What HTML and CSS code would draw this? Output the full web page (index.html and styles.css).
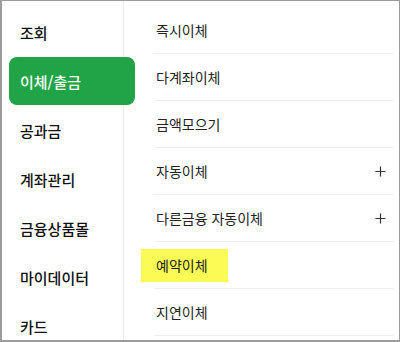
FILE: index.html
```html
<!DOCTYPE html>
<html lang="ko">
<head>
<meta charset="utf-8">
<link rel="stylesheet" href="styles.css">
</head>
<body>
<div class="frame">
  <nav class="side">
    <div class="side-item">조회</div>
    <div class="side-item active">이체/출금</div>
    <div class="side-item">공과금</div>
    <div class="side-item">계좌관리</div>
    <div class="side-item">금융상품몰</div>
    <div class="side-item">마이데이터</div>
    <div class="side-item">카드</div>
  </nav>
  <ul class="sub">
    <li class="sub-item">즉시이체</li>
    <li class="sub-item">다계좌이체</li>
    <li class="sub-item">금액모으기</li>
    <li class="sub-item">자동이체<svg class="plus" viewBox="0 0 11 11"><path d="M5.5 0.5v10M0.5 5.5h10"/></svg></li>
    <li class="sub-item">다른금융 자동이체<svg class="plus" viewBox="0 0 11 11"><path d="M5.5 0.5v10M0.5 5.5h10"/></svg></li>
    <li class="sub-item"><span class="mark">예약이체</span></li>
    <li class="sub-item">지연이체</li>
  </ul>
</div>
</body>
</html>
```
FILE: styles.css
```css
* { box-sizing: border-box; }
html, body { margin: 0; padding: 0; background: #fff; }
body { font-family: "Noto Sans CJK KR", "Noto Sans", sans-serif; }
.frame {
  width: 400px;
  height: 342px;
  border: 1px solid #9c9c9c;
  border-left-width: 2px;
  border-bottom-width: 2px;
  display: flex;
  overflow: hidden;
  background: #fff;
}
.side {
  width: 122px;
  flex: none;
  border-right: 1px solid #ececec;
  padding: 7px 0 0 7px;
  display: flex;
  flex-direction: column;
}
.side-item {
  height: 49px;
  display: flex;
  align-items: center;
  padding-left: 11px;
  font-size: 15px;
  font-weight: 500;
  color: #111;
  flex: none;
}
.side-item.active {
  width: 126px;
  height: 48px;
  margin-bottom: 1px;
  background: #21a347;
  color: #fff;
  border-radius: 8px;
  position: relative;
  z-index: 1;
}
.sub {
  list-style: none;
  margin: 0;
  padding: 6px 5px 0 30px;
  flex: 1;
  display: flex;
  flex-direction: column;
}
.sub-item {
  height: 47px;
  border-bottom: 1px solid #efefef;
  display: flex;
  align-items: center;
  justify-content: space-between;
  padding-left: 2px;
  padding-right: 8px;
  font-size: 14px;
  color: #222;
  flex: none;
}
.plus {
  width: 11px;
  height: 11px;
  stroke: #333;
  stroke-width: 1.2;
  fill: none;
}
.mark {
  display: inline-block;
  background: #fbfb55;
  height: 33px;
  line-height: 33px;
  padding: 0 20px 0 15px;
  margin-left: -15px;
}
```
